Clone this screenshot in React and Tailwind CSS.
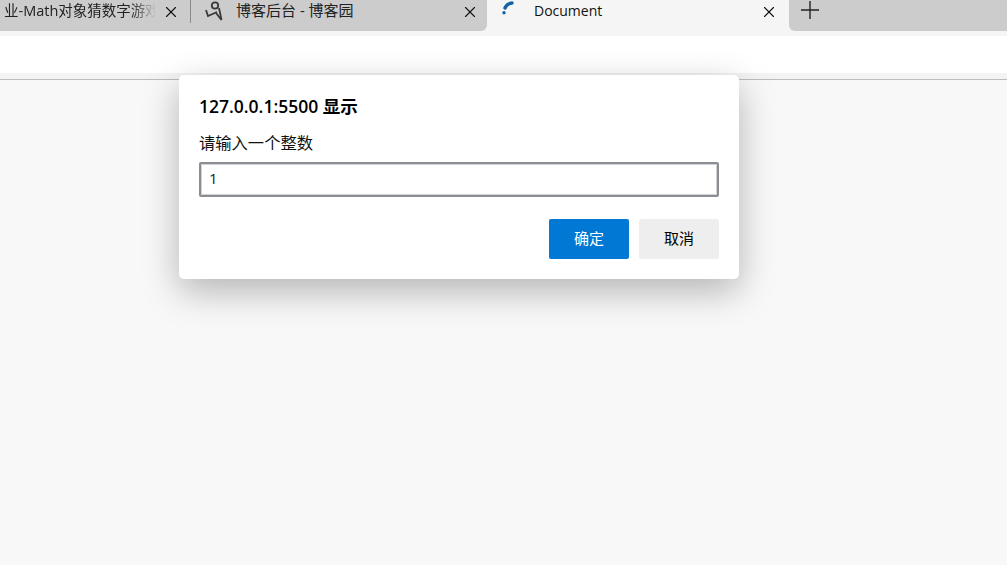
import { X } from 'lucide-react';

const font = "font-['Open_Sans','Noto_Sans_CJK_SC',sans-serif]";

const CloseIcon = ({ className = '' }) => (
  <X className={`mt-[3px] h-[18px] w-[18px] shrink-0 text-[#111] ${className}`} strokeWidth={1.5} />
);

export default function App() {
  return (
    <div className={`relative flex h-[565px] w-[1007px] flex-col overflow-hidden bg-[#f8f8f8] ${font}`}>
      {/* tab strip */}
      <div className="flex h-[36px] shrink-0 items-start bg-[#f5f5f5]">
        <div className="flex h-[31px] w-[191px] shrink-0 items-start bg-[#cccccc] pl-[4px]">
          <span className="mt-px w-[152px] overflow-hidden whitespace-nowrap text-[14.5px] leading-[20px] text-[#222] [mask-image:linear-gradient(to_right,black_126px,transparent_152px)]">
            业-Math对象猜数字游戏
          </span>
          <CloseIcon className="ml-[6px]" />
          <div className="ml-auto h-[23px] w-px bg-[#8a8a8a]" />
        </div>
        <div className="flex h-[31px] w-[296px] shrink-0 items-start rounded-br-[6px] bg-[#cccccc] pl-[14px] pr-[8px]">
          <svg className="h-[22px] w-[22px] shrink-0" viewBox="0 0 22 22" fill="none" stroke="#3a3a3a" strokeWidth="1.8">
            <path d="M1 10 L3 16 L12 12" />
            <circle cx="10" cy="5.5" r="3.2" />
            <path d="M14 8 L16.5 20 L11 13" />
          </svg>
          <span className="ml-[9px] whitespace-nowrap text-[15px] leading-[20px] text-[#222]">博客后台 - 博客园</span>
          <CloseIcon className="ml-auto" />
        </div>
        <div className="flex h-[31px] w-[302px] shrink-0 items-start pl-[12px] pr-[11px]">
          <svg className="h-[16px] w-[16px] shrink-0" viewBox="0 0 16 16" fill="none" stroke="#1464a5" strokeWidth="3.4" strokeLinecap="round">
            <path d="M5 12.7 L5 12.7" />
            <path d="M6 8 C7 5.5 9 3.5 13 3" />
          </svg>
          <span className="ml-[19px] mt-px text-[14px] leading-[20px] text-[#111]">Document</span>
          <CloseIcon className="ml-auto" />
        </div>
        <div className="h-[31px] flex-1 rounded-bl-[6px] bg-[#cccccc] pl-[12px] pt-px">
          <svg className="h-[18px] w-[18px]" viewBox="0 0 18 18" stroke="#222" strokeWidth="1.4">
            <path d="M0 9 H18 M9 0 V18" />
          </svg>
        </div>
      </div>
      {/* toolbar */}
      <div className="h-[37px] shrink-0 bg-white" />
      <div className="h-[7px] shrink-0 border-b border-b-[#bcbcbc] bg-[#f3f3f3]" />

      {/* prompt dialog */}
      <div className="absolute left-[179px] top-[75px] flex h-[204px] w-[560px] flex-col rounded-[5px] bg-white px-[20px] pt-[19px] shadow-[0_12px_36px_rgba(0,0,0,0.28)]">
        <div className="text-[17.5px] font-semibold leading-[24px] text-black">127.0.0.1:5500 显示</div>
        <div className="mt-[14px] text-[16.3px] leading-[22px] text-[#111]">请输入一个整数</div>
        <div className="mt-[8px] flex h-[35px] items-center rounded-[2px] border-2 border-[#8a8d91] px-[8px] pb-[2px] text-[15px] text-[#222] shadow-[inset_0_0_0_1px_#d0d2d4]">1</div>
        <div className="mt-[22px] flex justify-end gap-[10px]">
          <button className="h-[40px] w-[80px] rounded-[2px] bg-[#0078d4] pb-[2px] text-[15px] text-white">确定</button>
          <button className="h-[40px] w-[80px] rounded-[2px] bg-[#eeeeee] pb-[2px] text-[15px] text-black">取消</button>
        </div>
      </div>
    </div>
  );
}
